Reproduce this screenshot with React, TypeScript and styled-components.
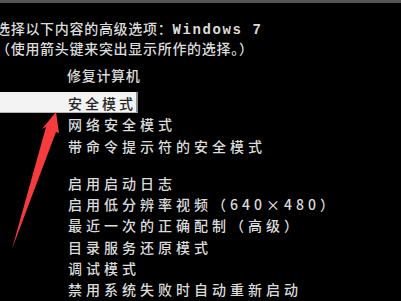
import styled, { createGlobalStyle } from 'styled-components';

const GlobalStyle = createGlobalStyle`
  html, body {
    margin: 0;
    padding: 0;
    background: #000;
  }
`;

const Screen = styled.div`
  position: relative;
  width: 401px;
  height: 301px;
  overflow: hidden;
  background: #000;
  font-family: 'Noto Sans CJK SC', 'Noto Sans', sans-serif;
  font-weight: 500;
  color: #dcdcdc;
`;

const TopStrip = styled.div`
  height: 3px;
  background: #555;
`;

const Header = styled.div`
  padding-top: 15px;
  margin-left: -4px;
  font-size: 14px;
  line-height: 20px;
  letter-spacing: 0.7px;
  white-space: nowrap;
`;

const HeaderLine = styled.div`
  height: 20px;
`;

const Latin = styled.span`
  font-family: 'Liberation Mono', 'DejaVu Sans Mono', monospace;
  font-weight: 700;
  letter-spacing: 1.6px;
`;

const Title = styled.div`
  margin-top: 7px;
  padding-left: 67px;
  font-size: 14px;
  line-height: 20px;
  letter-spacing: 0.7px;
`;

const Menu = styled.div<{ $gap: number }>`
  margin-top: ${(p) => p.$gap}px;
  display: flex;
  flex-direction: column;
  align-items: flex-start;
`;

const Item = styled.div<{ $selected?: boolean }>`
  box-sizing: border-box;
  height: 21.3px;
  padding: 2px 0 0 68px;
  font-size: 14px;
  line-height: 19px;
  letter-spacing: ${(p) => (p.$selected ? 3 : 4)}px;
  white-space: nowrap;
  color: ${(p) => (p.$selected ? '#262626' : '#dcdcdc')};
  background: ${(p) => (p.$selected ? '#f3f3f3' : 'transparent')};
  border-right: 2px solid ${(p) => (p.$selected ? '#8c8c8c' : 'transparent')};
  border-bottom: 1px solid ${(p) => (p.$selected ? '#b5b5b5' : 'transparent')};
`;

const Arrow = styled.svg`
  position: absolute;
  left: 0;
  top: 0;
  pointer-events: none;
`;

const safeModes = ['安全模式', '网络安全模式', '带命令提示符的安全模式'];

const otherModes = [
  '启用启动日志',
  '启用低分辨率视频（640×480）',
  '最近一次的正确配制（高级）',
  '目录服务还原模式',
  '调试模式',
  '禁用系统失败时自动重新启动',
];

export default function App() {
  return (
    <>
      <GlobalStyle />
      <Screen>
        <TopStrip />
        <Header>
          <HeaderLine>
            选择以下内容的高级选项：<Latin>Windows 7</Latin>
          </HeaderLine>
          <HeaderLine>（使用箭头键来突出显示所作的选择。）</HeaderLine>
        </Header>
        <Title>修复计算机</Title>
        <Menu $gap={7}>
          {safeModes.map((m, i) => (
            <Item key={m} $selected={i === 0}>
              {m}
            </Item>
          ))}
        </Menu>
        <Menu $gap={16}>
          {otherModes.map((m) => (
            <Item key={m}>{m}</Item>
          ))}
        </Menu>
        <Arrow width="401" height="301" viewBox="0 0 401 301">
          <polygon
            points="56,112 59,133 56,132 12,249 46,127 42,129"
            fill="#f53b3b"
          />
        </Arrow>
      </Screen>
    </>
  );
}
